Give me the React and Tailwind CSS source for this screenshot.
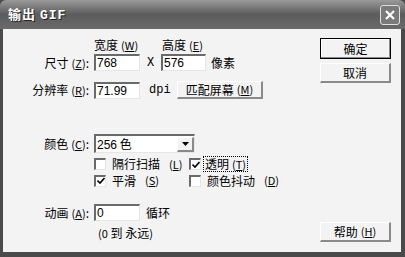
import React from 'react';

const cjk = { fontFamily: '"Noto Sans CJK SC", "Liberation Sans", sans-serif' };

const Mn = ({ k }) => (
  <span className="text-[11px] ml-[3px]">
    (<span className="underline">{k}</span>)
  </span>
);

const Field = ({ value, w = 'w-[46px]' }) => (
  <div
    className={`${w} h-[17px] bg-white border-t-2 border-l-2 border-t-[#6a6a6a] border-l-[#6a6a6a] border-b border-r border-b-[#e6e6e6] border-r-[#e6e6e6] flex items-center pl-[1px] text-[12px] leading-none`}
    style={{ fontFamily: '"Liberation Sans", sans-serif' }}
  >
    {value}
  </div>
);

const Button = ({ children, def = false, className = '' }) => (
  <div
    className={`${className} flex items-center justify-center text-[12px] leading-none ${
      def
        ? 'border border-black shadow-[inset_-1px_-1px_0_#8a8a8a,inset_1px_1px_0_#ffffff]'
        : 'border-b-2 border-r-2 border-b-[#8a8a8a] border-r-[#8a8a8a] border-t border-l border-t-white border-l-white'
    }`}
  >
    {children}
  </div>
);

const Check = ({ checked }) => (
  <div className="w-[12px] h-[12px] bg-white border-t-2 border-l-2 border-t-[#6a6a6a] border-l-[#6a6a6a] border-b border-r border-b-[#e6e6e6] border-r-[#e6e6e6] flex items-center justify-center">
    {checked && (
      <svg width="8" height="8" viewBox="0 0 8 8">
        <path d="M0.5 3.5 L3 6 L7.5 1" stroke="black" strokeWidth="1.6" fill="none" />
      </svg>
    )}
  </div>
);

const Label = ({ children }) => (
  <div className="w-[88px] text-right text-[12px] leading-none pr-[2px]">{children}</div>
);

export default function App() {
  return (
    <div className="w-[405px] h-[257px] bg-[#4a4a4a] flex flex-col text-black" style={cjk}>
      {/* title bar */}
      <div className="h-[29px] rounded-t-[6px] bg-gradient-to-b from-[#9a9a9a] via-[#5c5c5c] to-[#6a6a6a] flex items-center justify-between pl-[8px] pr-[5px]">
        <div className="text-white font-bold text-[13px] tracking-[1px] [text-shadow:1px_1px_0_#222]">
          输出 <span style={{ fontFamily: '"Liberation Mono", monospace' }}>GIF</span>
        </div>
        <div className="w-[20px] h-[20px] rounded-[3px] border border-[#e0e0e0] bg-[#7a7a7a] flex items-center justify-center">
          <svg width="12" height="12" viewBox="0 0 12 12">
            <path d="M2 2 L10 10 M10 2 L2 10" stroke="white" strokeWidth="2.2" />
          </svg>
        </div>
      </div>

      {/* body */}
      <div className="flex-1 mx-[3px] mb-[5px] mr-[4px] bg-[#f3f3f3] flex">
        <div className="flex-1 flex flex-col">
          <div className="mt-[9px] h-[14px] flex items-center text-[12px] leading-none">
            <div className="w-[91px]" />
            <div className="w-[68px]">宽度<Mn k="W" /></div>
            <div>高度<Mn k="E" /></div>
          </div>

          <div className="mt-[2px] h-[17px] flex items-center">
            <Label>尺寸<Mn k="Z" />:</Label>
            <div className="ml-[3px]"><Field value="768" /></div>
            <div className="w-[21px] text-center text-[12px] leading-none" style={{ fontFamily: '"Liberation Mono", monospace' }}>X</div>
            <Field value="576" w="w-[45px]" />
            <div className="ml-[5px] text-[12px] leading-none">像素</div>
          </div>

          <div className="mt-[10px] h-[18px] flex items-center">
            <Label>分辨率<Mn k="R" />:</Label>
            <div className="ml-[3px]"><Field value="71.99" /></div>
            <div className="ml-[9px] w-[28px] text-[12px] leading-none" style={{ fontFamily: '"Liberation Mono", monospace' }}>dpi</div>
            <Button className="w-[86px] h-[18px]">匹配屏幕<Mn k="M" /></Button>
          </div>

          <div className="mt-[35px] h-[19px] flex items-center">
            <Label>颜色<Mn k="C" />:</Label>
            <div className="ml-[3px] w-[101px] h-[19px] bg-white border-t-2 border-l-2 border-t-[#6a6a6a] border-l-[#6a6a6a] border-b border-r border-b-[#e6e6e6] border-r-[#e6e6e6] flex items-center">
              <div className="flex-1 pl-[1px] text-[12px] leading-none">
                <span style={{ fontFamily: '"Liberation Sans", sans-serif' }}>256</span> 色
              </div>
              <div className="w-[17px] h-[15px] bg-[#f3f3f3] border-t border-l border-white border-b-2 border-r-2 border-b-[#8a8a8a] border-r-[#8a8a8a] flex items-center justify-center">
                <svg width="7" height="4" viewBox="0 0 7 4"><path d="M0 0 H7 L3.5 4 Z" fill="black" /></svg>
              </div>
            </div>
          </div>

          <div className="mt-[3px] h-[16px] flex items-center text-[12px] leading-none">
            <div className="w-[91px]" />
            <div className="w-[95px] flex items-center gap-[6px]"><Check />隔行扫描<Mn k="L" /></div>
            <div className="flex items-center gap-[2px]"><Check checked /><span className="border border-dotted border-black px-[1px] py-[1px]">透明<Mn k="T" /></span></div>
          </div>

          <div className="h-[17px] flex items-center text-[12px] leading-none">
            <div className="w-[91px]" />
            <div className="w-[95px] flex items-center gap-[6px]"><Check checked />平滑<Mn k="S" /></div>
            <div className="flex items-center gap-[6px]"><Check />颜色抖动<Mn k="D" /></div>
          </div>

          <div className="mt-[15px] h-[17px] flex items-center">
            <Label>动画<Mn k="A" />:</Label>
            <div className="ml-[3px]"><Field value="0" /></div>
            <div className="ml-[6px] text-[12px] leading-none">循环</div>
          </div>

          <div className="mt-[5px] h-[14px] flex items-center text-[12px] leading-none">
            <div className="w-[95px]" />
            <span className="text-[11px]">(0</span>&nbsp;到&nbsp;永远<span className="text-[11px]">)</span>
          </div>
        </div>

        <div className="w-[81px] flex flex-col pr-[10px] pb-[10px]">
          <Button def className="mt-[9px] w-[71px] h-[21px]">确定</Button>
          <Button className="mt-[4px] w-[71px] h-[20px]">取消</Button>
          <Button className="mt-auto w-[71px] h-[20px]">帮助<Mn k="H" /></Button>
        </div>
      </div>
    </div>
  );
}
